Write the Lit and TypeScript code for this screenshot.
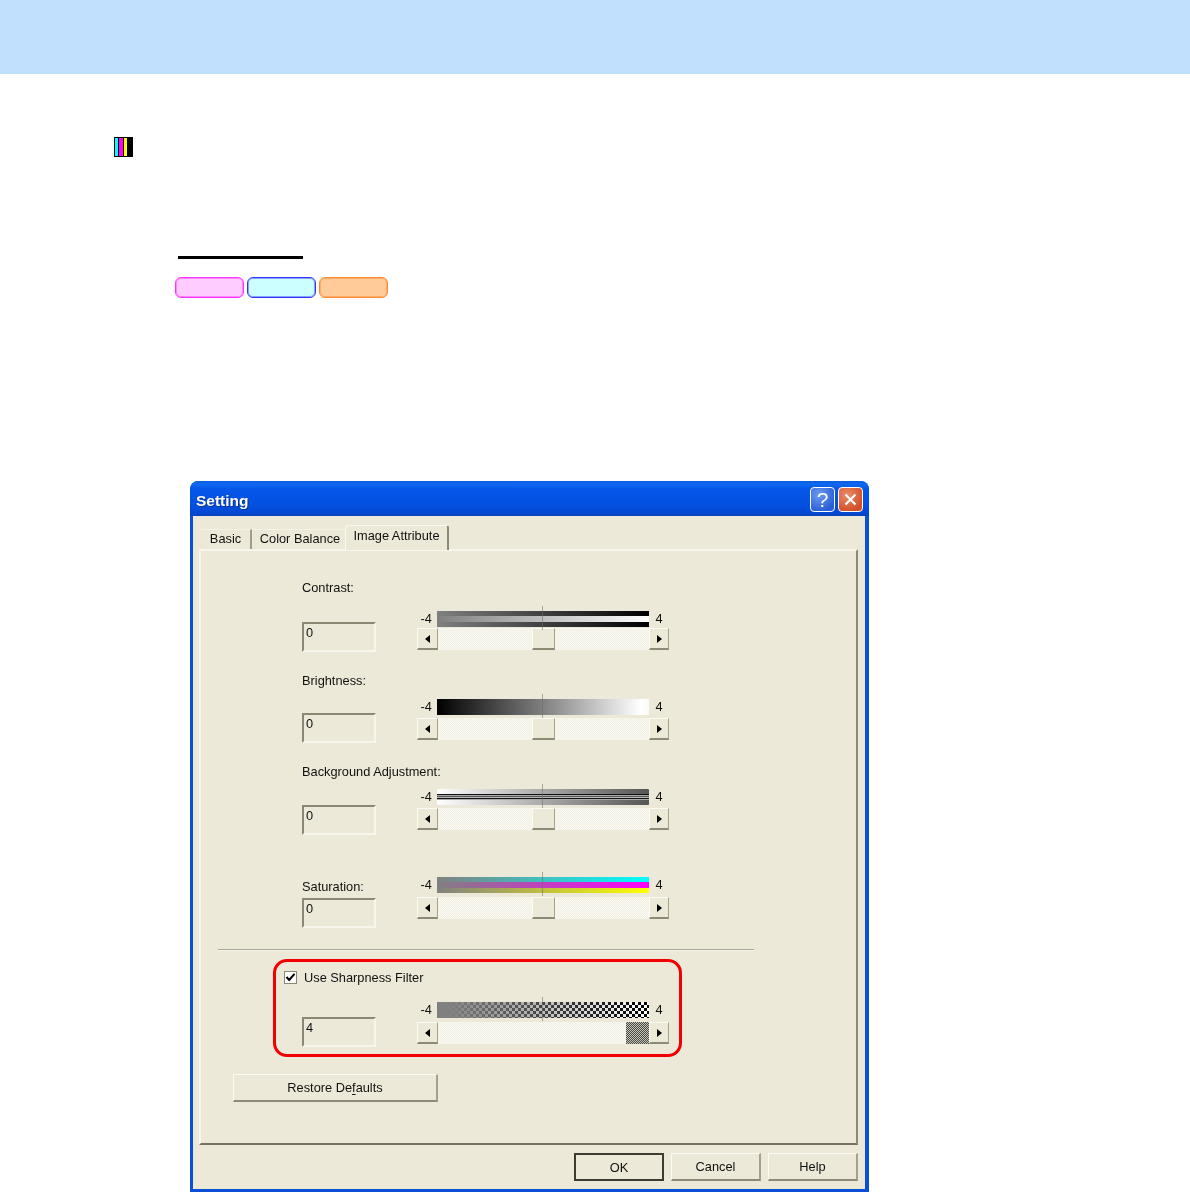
import { LitElement, html, css } from "lit";
import { customElement } from "lit/decorators.js";

interface Slider { cls: string; label: string; value: number; bar: string; }

const SLIDERS: Slider[] = [
  { cls: "r1", label: "Contrast:", value: 0, bar: "contrast" },
  { cls: "r2", label: "Brightness:", value: 0, bar: "brightness" },
  { cls: "r3", label: "Background Adjustment:", value: 0, bar: "background" },
  { cls: "r4", label: "Saturation:", value: 0, bar: "saturation" },
];

@customElement("app-root")
export class AppRoot extends LitElement {
  static styles = css`
    :host { display: block; width: 1190px; height: 1193px; overflow: hidden; background: #fff; font-family: "Liberation Sans", Arial, sans-serif; }
    .band { height: 74px; background: #c1e0fd; }
    .chip { margin: 63px 0 0 114px; width: 19px; height: 20px; box-sizing: border-box; border: 1px solid #000; background: linear-gradient(to right, #0ff 0 3px, #000 3px 4px, #f0f 4px 8px, #000 8px 9px, #ff0 9px 12px, #000 12px); }
    .rule { margin: 99px 0 0 178px; width: 125px; height: 3px; background: #000; }
    .pills { display: flex; gap: 3px; margin: 18px 0 0 175px; }
    .pill { width: 69px; height: 21px; box-sizing: border-box; border: 1px solid; border-radius: 6px; }
    .pink { background: #fcf; border-color: #f3f; box-shadow: inset 0 0 0 1px rgba(255,51,255,.45); }
    .cyan { background: #cff; border-color: #33f; box-shadow: inset 0 0 0 1px rgba(51,51,255,.45); }
    .orange { background: #fc9; border-color: #f83; box-shadow: inset 0 0 0 1px rgba(255,136,51,.45); }

    .dialog { margin: 183px 0 0 190px; width: 679px; height: 711px; box-sizing: border-box; border-radius: 8px 8px 0 0; background: #0a4fd6; padding: 0 4px 3px 3px; display: flex; flex-direction: column; color: #111; font-size: 12.8px; overflow: hidden; filter: blur(0.4px); }
    .title { height: 35px; margin: 0 -4px 0 -3px; flex: none; box-sizing: border-box; padding: 6px 6px 0 6px; display: flex; align-items: flex-start; justify-content: space-between; background: linear-gradient(to bottom, #0a5ce0 0, #0f6af0 3px, #0556e8 8px, #0450e0 24px, #0347d0 33px, #0a3fb8 35px); border-radius: 8px 8px 0 0; }
    .title b { font: bold 15.5px "Liberation Sans", Arial, sans-serif; color: #fff; text-shadow: 1px 1px 0 #0a2f90; line-height: 27px; }
    .caps { display: flex; gap: 3px; }
    .cap { width: 25px; height: 25px; box-sizing: border-box; border: 1px solid #fff; border-radius: 4px; color: #fff; display: flex; align-items: center; justify-content: center; }
    .cap.help { background: radial-gradient(circle at 35% 30%, #6f9bf0, #2a5fd8 75%); font: 21px "Liberation Sans", sans-serif; }
    .cap.close { background: radial-gradient(circle at 35% 30%, #ea8b68, #d2502a 75%); }

    .body { flex: 1; background: #ece9d8; padding: 10px 7px 0 6px; display: flex; flex-direction: column; min-height: 0; }
    .tabs { display: flex; height: 23px; padding-left: 2px; align-items: flex-end; position: relative; z-index: 1; }
    .tab { height: 20px; line-height: 17px; text-align: center; box-sizing: border-box; }
    .t1 { width: 51px; border-right: 2px solid #a09d88; border-top: 1px solid #f4f2e6; }
    .t2 { width: 93px; padding-left: 3px; border-top: 1px solid #f4f2e6; }
    .t3 { width: 104px; height: 25px; line-height: 20px; margin-bottom: -1px; background: #ece9d8; border-top: 1px solid #faf9f2; border-left: 1px solid #faf9f2; border-right: 2px solid #8d8a75; border-radius: 3px 3px 0 0; }
    .panel { height: 596px; flex: none; box-sizing: border-box; padding-top: 31px; border: 1px solid; border-width: 2px 2px 2px 2px; border-color: #f8f6ec #8d8a75 #75725f #f8f6ec; }

    .row { display: flex; margin-left: 101px; --label-pad: 0px; --input-gap: 26px; --bar-top: 31px; --bar-gap: 1px; }
    .r1 { margin-top: -2px; }
    .r2 { margin-top: 21px; --input-gap: 24px; --bar-top: 26px; --bar-gap: 3px; }
    .r3 { margin-top: 21px; --input-gap: 25px; --bar-top: 25px; --bar-gap: 3px; }
    .r4 { margin-top: 42px; --label-pad: 2px; --input-gap: 3px; --bar-top: 0px; --bar-gap: 4px; }
    .r5 { margin: 18px 0 0 26px; --label-pad: 15px; --input-gap: 0px; --bar-top: 0px; --bar-gap: 4px; }
    .left { width: 115px; flex: none; padding-top: var(--label-pad); }
    .lab { height: 16px; line-height: 16px; margin-bottom: var(--input-gap); white-space: nowrap; }
    .field { width: 74px; height: 30px; box-sizing: border-box; border: 2px solid; border-color: #8a8772 #f8f6ec #f8f6ec #8a8772; padding: 0 2px; line-height: 17px; }

    .slider { width: 252px; flex: none; padding-top: var(--bar-top); }
    .barline { display: flex; height: 16px; line-height: 16px; text-align: center; }
    .end { width: 20px; flex: none; }
    .neg { text-align: right; padding-right: 5px; box-sizing: border-box; }
    .bar { width: 212px; flex: none; position: relative; }
    .tick { position: absolute; left: 105px; top: -5px; bottom: -3px; width: 1px; background: #6f6d5f; opacity: .55; }
    .contrast { background: linear-gradient(to right, #808080, rgba(128,128,128,0)), linear-gradient(to bottom, #000 0 33%, #fff 33% 66%, #000 66% 100%); }
    .brightness { background: linear-gradient(to right, #000, #808080 50%, #fff 96%, #fafafa); }
    .background { background: linear-gradient(to bottom, transparent 5px, #111 5px 6px, #aaa 6px 7px, #555 7px 8px, #bbb 8px 9px, #111 9px 10px, #aaa 10px 11px, transparent 11px), linear-gradient(to right, #fff, #555); border-radius: 1px; }
    .saturation { background: linear-gradient(to right, #808080, rgba(128,128,128,0)), linear-gradient(to bottom, #0ff 0 5px, #f0f 5px 11px, #ff0 11px 16px); }
    .sharpness { background: linear-gradient(to right, #808080 5%, rgba(128,128,128,0) 100%), conic-gradient(#000 25%, #fff 0 50%, #000 0 75%, #fff 0) 0 0 / 6px 6px; }

    .track-row { display: flex; margin-top: var(--bar-gap); height: 22px; background: repeating-conic-gradient(#f2f0e4 0 25%, #f9f8f2 0 50%) 0 0 / 2px 2px; }
    .btn3d { box-sizing: border-box; background: #ece9d8; border: 1px solid; border-color: #fbfaf3 #a5a28c #8d8a75 #fbfaf3; border-bottom-width: 2px; border-right-width: 1px; }
    .arrow { width: 20px; flex: none; display: flex; align-items: center; justify-content: center; }
    .arrow.l { width: 21px; }
    .arrow i { display: block; width: 0; height: 0; border-style: solid; border-color: transparent; border-width: 4px 0 4px 5px; border-left-color: #000; }
    .arrow.l i { border-width: 4px 5px 4px 0; border-right-color: #000; border-left-color: transparent; }
    .gap { flex: none; }
    .thumb { width: 23px; flex: none; }
    .thumb.active { background: repeating-conic-gradient(#4a4a46 0 25%, #c4c2b4 0 50%) 0 0 / 2px 2px; }

    .sep { margin: 21px 0 0 17px; width: 536px; height: 1px; background: #a9a796; border-bottom: 1px solid #f8f6ec; }
    .focus { margin: 8px 0 0 72px; width: 409px; height: 98px; box-sizing: border-box; border: 3px solid #f30000; border-radius: 14px; }
    .check { display: flex; align-items: center; height: 13px; margin: 9px 0 0 8px; gap: 7px; }
    .box { width: 13px; height: 13px; box-sizing: border-box; background: #fff; border: 1px solid #8a8772; display: flex; align-items: center; justify-content: center; }
    .restore { margin: 17px 0 0 32px; width: 205px; height: 28px; }
    .btn { display: flex; align-items: center; justify-content: center; box-sizing: border-box; border-right-width: 2px; }
    u { text-underline-offset: 2px; }

    .footer { display: flex; justify-content: flex-end; gap: 7px; padding-top: 8px; }
    .footer .btn { width: 90px; height: 28px; }
    .footer .def { border: 2px solid #3e3c30; }
  `;

  private slider(bar: string, value: number) {
    const left = (value + 4) * 23.5;
    const active = value !== 0;
    return html`
      <div class="slider">
        <div class="barline">
          <span class="end neg">-4</span>
          <div class="bar ${bar}"><span class="tick"></span></div>
          <span class="end">4</span>
        </div>
        <div class="track-row">
          <div class="btn3d arrow l"><i></i></div>
          <div class="gap" style="width:${left}px"></div>
          <div class="thumb ${active ? "active" : "btn3d"}"></div>
          <div class="gap" style="width:${188 - left}px"></div>
          <div class="btn3d arrow"><i></i></div>
        </div>
      </div>`;
  }

  render() {
    return html`
      <div class="band"></div>
      <div class="chip"></div>
      <div class="rule"></div>
      <div class="pills">
        <div class="pill pink"></div><div class="pill cyan"></div><div class="pill orange"></div>
      </div>
      <div class="dialog">
        <div class="title">
          <b>Setting</b>
          <div class="caps">
            <div class="cap help">?</div>
            <div class="cap close">
              <svg width="15" height="15" viewBox="0 0 15 15"><path d="M2.5 2.5 12.5 12.5M12.5 2.5 2.5 12.5" stroke="#fff" stroke-width="2.2" fill="none"/></svg>
            </div>
          </div>
        </div>
        <div class="body">
          <div class="tabs">
            <div class="tab t1">Basic</div>
            <div class="tab t2">Color Balance</div>
            <div class="tab t3">Image Attribute</div>
          </div>
          <div class="panel">
            ${SLIDERS.map((s) => html`
              <div class="row ${s.cls}">
                <div class="left">
                  <div class="lab">${s.label}</div>
                  <div class="field">${s.value}</div>
                </div>
                ${this.slider(s.bar, s.value)}
              </div>`)}
            <div class="sep"></div>
            <div class="focus">
              <div class="check">
                <div class="box">
                  <svg width="11" height="11" viewBox="0 0 11 11"><path d="M1.5 5 4.2 8 9.5 1.8" stroke="#000" stroke-width="2" fill="none"/></svg>
                </div>
                <span>Use Sharpness Filter</span>
              </div>
              <div class="row r5">
                <div class="left"><div class="field">4</div></div>
                ${this.slider("sharpness", 4)}
              </div>
            </div>
            <div class="btn3d btn restore"><span>Restore De<u>f</u>aults</span></div>
          </div>
          <div class="footer">
            <div class="btn3d btn def">OK</div>
            <div class="btn3d btn">Cancel</div>
            <div class="btn3d btn">Help</div>
          </div>
        </div>
      </div>
    `;
  }
}
